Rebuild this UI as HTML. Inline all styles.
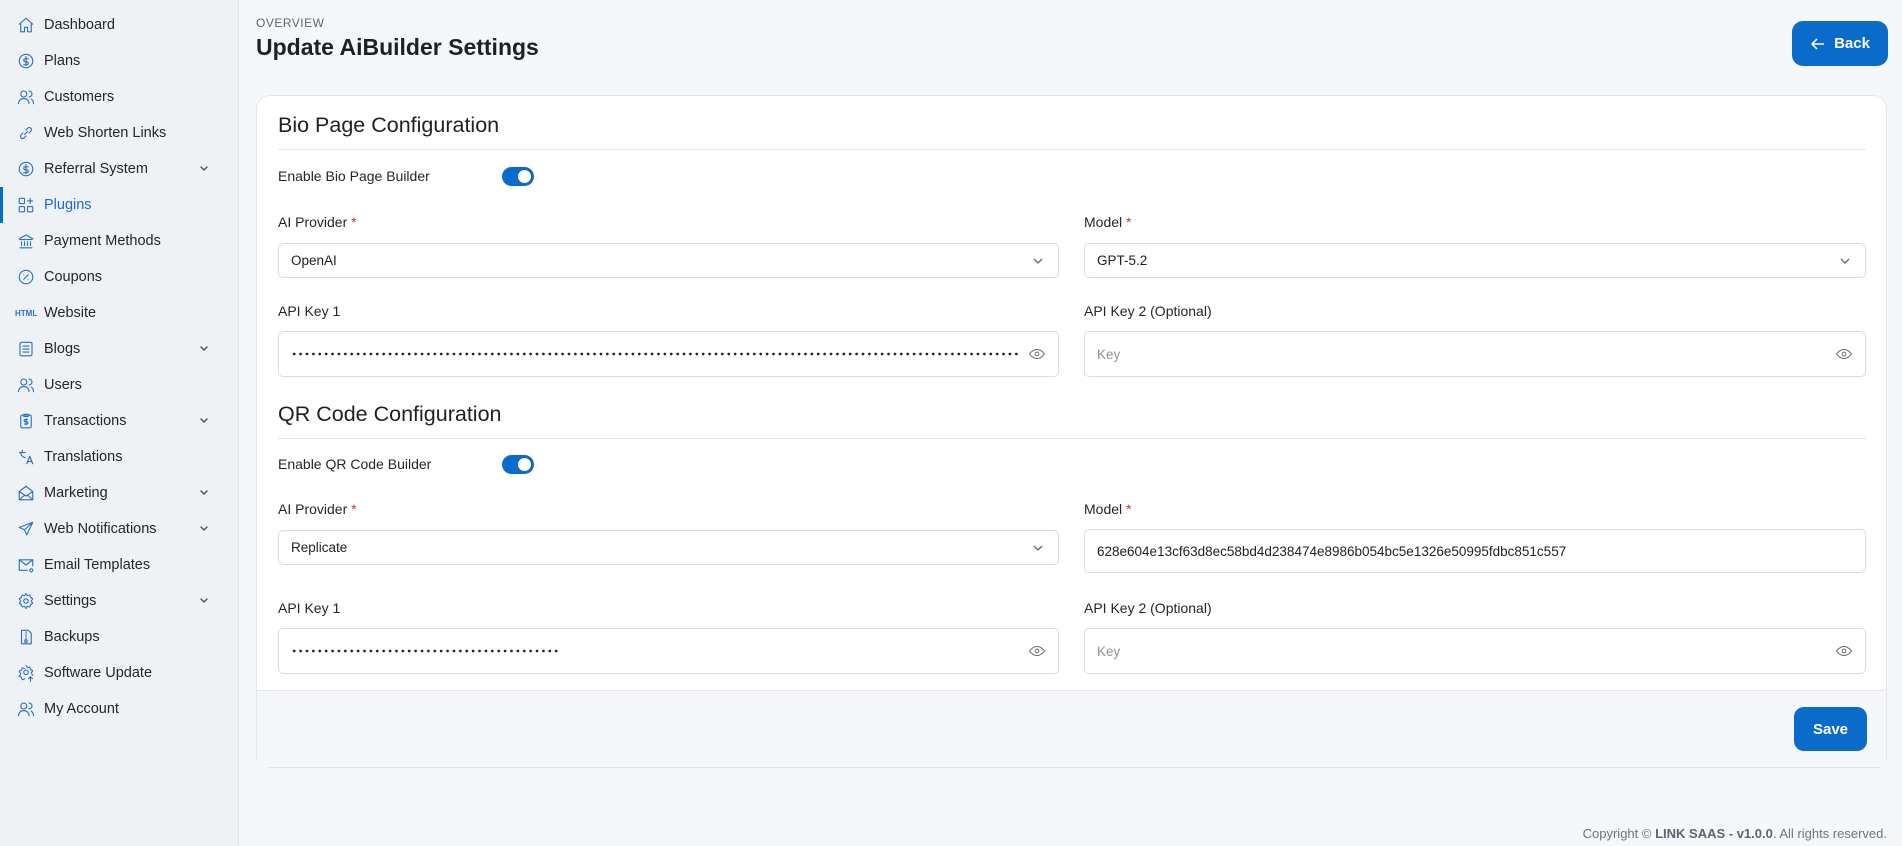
<!DOCTYPE html>
<html><head><meta charset="utf-8"><style>
*{box-sizing:border-box;margin:0;padding:0}
body{width:1902px;height:846px;overflow:hidden;background:#f5f7fa;font-family:"Liberation Sans",sans-serif;color:#1c2126;position:relative}
.sb{position:absolute;left:0;top:0;width:239px;height:846px;background:#eef2f5;border-right:1px solid #dde3e8}
.it{position:absolute;left:0;height:30px;width:238px;display:flex;align-items:center;font-size:14.5px;color:#22272c}
.it svg{position:absolute;left:17px;width:18px;height:18px;fill:none;stroke:#2d6fc4;stroke-width:1.5;stroke-linecap:round;stroke-linejoin:round}
.it span{position:absolute;left:44px}
.it .ch{position:absolute;left:199px;width:10px;height:10px}
.it .ch svg{left:0;width:10px;height:10px;stroke:#555}
.act{color:#1a6dc9}
.act:before{content:"";position:absolute;left:0;top:-3px;width:3px;height:36px;background:#0b6bcb}
.ov{position:absolute;left:256px;top:16px;font-size:12px;letter-spacing:.5px;color:#5e6670}
.h1{position:absolute;left:256px;top:34px;font-size:23px;font-weight:bold;color:#1c2126}
.back{position:absolute;left:1792px;top:21px;width:96px;height:45px;background:#0b6bcb;border-radius:11px;color:#fff;font-size:15px;font-weight:bold;display:flex;align-items:center;justify-content:center;gap:8px}
.card{position:absolute;left:256px;top:95px;width:1631px;height:595px;background:#fff;border:1px solid #e3e7ec;border-bottom:none;border-radius:14px 14px 0 0}
.foot{position:absolute;left:256px;top:690px;width:1631px;height:70px;background:#f5f7fa;border-top:1px solid #e3e7ec;border-left:1px solid #e3e7ec;border-right:1px solid #e3e7ec}
.line{position:absolute;left:267px;top:767px;width:1613px;height:1px;background:#e3e7ec}
.h2{position:absolute;left:278px;font-size:21.5px;color:#1c2126}
.div{position:absolute;left:278px;width:1588px;height:1px;background:#e3e7ec}
.lb{position:absolute;font-size:14px;color:#22272c}
.lb b{color:#d32f2f;font-weight:normal}
.in{position:absolute;background:#fff;border:1px solid #d8dde3;border-radius:5px;font-size:13.5px;display:flex;align-items:center;padding-left:12px;color:#1c2126}
.in .ph{color:#8a9199}
.dots{display:block;height:6.4px;background:radial-gradient(circle,#1c2126 1.2px,transparent 1.6px) 0 0/6.4px 6.4px repeat-x}
.in svg{position:absolute;right:12px;fill:none;stroke:#666;stroke-width:1.3}
.tg{position:absolute;left:502px;width:32px;height:19px;border-radius:10px;background:#0b6bcb}
.tg:after{content:"";position:absolute;right:3px;top:3px;width:13px;height:13px;border-radius:50%;background:#fff}
.save{position:absolute;left:1794px;top:707px;width:73px;height:44px;background:#0b6bcb;border-radius:10px;color:#fff;font-weight:bold;font-size:15px;display:flex;align-items:center;justify-content:center}
.copy{position:absolute;right:15px;top:826px;font-size:13px;color:#6b7480}
.copy b{color:#5b6470}
</style></head><body>
<div class="sb">
<div class="it" style="top:10px"><svg viewBox="0 0 24 24"><path d="M3 11l9-8 9 8M5 9v12h5v-6h4v6h5V9"/></svg><span>Dashboard</span></div>
<div class="it" style="top:46px"><svg viewBox="0 0 24 24"><circle cx="12" cy="12" r="9"/><path d="M15 9h-4a2 2 0 000 4h2a2 2 0 010 4H9M12 6v12"/></svg><span>Plans</span></div>
<div class="it" style="top:82px"><svg viewBox="0 0 24 24"><circle cx="9" cy="8" r="4"/><path d="M2 21c0-4 3-7 7-7s7 3 7 7M16 4a4 4 0 010 8M19 15c2 1 3 3 3 6"/></svg><span>Customers</span></div>
<div class="it" style="top:118px"><svg viewBox="0 0 24 24"><path d="M10 14l4-4M8 12l-3 3a3 3 0 004 4l3-3M16 12l3-3a3 3 0 00-4-4l-3 3"/></svg><span>Web Shorten Links</span></div>
<div class="it" style="top:154px"><svg viewBox="0 0 24 24"><circle cx="12" cy="12" r="9"/><path d="M15 9h-4a2 2 0 000 4h2a2 2 0 010 4H9M12 6v12"/></svg><span>Referral System</span><div class="ch"><svg viewBox="0 0 10 10"><path d="M2 3l3 3 3-3"/></svg></div></div>
<div class="it act" style="top:190px"><svg viewBox="0 0 24 24"><rect x="3" y="3" width="7" height="7" rx="1"/><rect x="3" y="14" width="7" height="7" rx="1"/><rect x="14" y="14" width="7" height="7" rx="1"/><path d="M17.5 3v7M14 6.5h7"/></svg><span>Plugins</span></div>
<div class="it" style="top:226px"><svg viewBox="0 0 24 24"><path d="M3 9l9-5 9 5M4 10h16M4 21h16M6 13v5M10 13v5M14 13v5M18 13v5"/></svg><span>Payment Methods</span></div>
<div class="it" style="top:262px"><svg viewBox="0 0 24 24"><circle cx="12" cy="12" r="9"/><path d="M9 15l6-6M9 9h.01M15 15h.01"/></svg><span>Coupons</span></div>
<div class="it" style="top:298px"><span style="left:15px;font-size:8px;font-weight:bold;color:#2d6fc4">HTML</span><span>Website</span></div>
<div class="it" style="top:334px"><svg viewBox="0 0 24 24"><rect x="4" y="3" width="16" height="18" rx="2"/><path d="M8 8h8M8 12h8M8 16h8"/></svg><span>Blogs</span><div class="ch"><svg viewBox="0 0 10 10"><path d="M2 3l3 3 3-3"/></svg></div></div>
<div class="it" style="top:370px"><svg viewBox="0 0 24 24"><circle cx="9" cy="8" r="4"/><path d="M2 21c0-4 3-7 7-7s7 3 7 7M16 4a4 4 0 010 8M19 15c2 1 3 3 3 6"/></svg><span>Users</span></div>
<div class="it" style="top:406px"><svg viewBox="0 0 24 24"><rect x="5" y="4" width="14" height="17" rx="2"/><path d="M9 3h6v3H9zM14 10h-3a1.5 1.5 0 000 3h2a1.5 1.5 0 010 3h-3M12 9v8"/></svg><span>Transactions</span><div class="ch"><svg viewBox="0 0 10 10"><path d="M2 3l3 3 3-3"/></svg></div></div>
<div class="it" style="top:442px"><svg viewBox="0 0 24 24"><path d="M3 6h8M7 3v3M5 6c0 4 3 6 6 7M13 21l4-10 4 10M14.5 18h5"/></svg><span>Translations</span></div>
<div class="it" style="top:478px"><svg viewBox="0 0 24 24"><path d="M3 10l9-7 9 7v11H3zM3 10l9 6 9-6M3 21l7-6M21 21l-7-6"/></svg><span>Marketing</span><div class="ch"><svg viewBox="0 0 10 10"><path d="M2 3l3 3 3-3"/></svg></div></div>
<div class="it" style="top:514px"><svg viewBox="0 0 24 24"><path d="M21 3L3 10l7 3 3 7zM10 13l11-10"/></svg><span>Web Notifications</span><div class="ch"><svg viewBox="0 0 10 10"><path d="M2 3l3 3 3-3"/></svg></div></div>
<div class="it" style="top:550px"><svg viewBox="0 0 24 24"><path d="M14 19H3V5h18v8M3 5l9 7 9-7"/><circle cx="19" cy="19" r="2"/></svg><span>Email Templates</span></div>
<div class="it" style="top:586px"><svg viewBox="0 0 24 24"><circle cx="12" cy="12" r="3"/><path d="M12 2l2 3 3-1 1 3 3 2-2 3 2 3-3 2-1 3-3-1-2 3-2-3-3 1-1-3-3-2 2-3-2-3 3-2 1-3 3 1z"/></svg><span>Settings</span><div class="ch"><svg viewBox="0 0 10 10"><path d="M2 3l3 3 3-3"/></svg></div></div>
<div class="it" style="top:622px"><svg viewBox="0 0 24 24"><path d="M6 3h9l4 4v14H6zM12 5v2M12 9v2M12 13v2"/><rect x="10.5" y="16" width="3" height="3"/></svg><span>Backups</span></div>
<div class="it" style="top:658px"><svg viewBox="0 0 24 24"><circle cx="12" cy="11" r="3"/><path d="M12 2l2 3 3-1 1 3 3 2-2 3 2 3M10 20l-3 1-1-3-3-2 2-3-2-3 3-2 1-3 3 1M18 23v-6M15.5 19.5L18 17l2.5 2.5"/></svg><span>Software Update</span></div>
<div class="it" style="top:694px"><svg viewBox="0 0 24 24"><circle cx="9" cy="8" r="4"/><path d="M2 21c0-4 3-7 7-7s7 3 7 7M16 4a4 4 0 010 8M19 15c2 1 3 3 3 6"/></svg><span>My Account</span></div>
</div>

<div class="ov">OVERVIEW</div>
<div class="h1">Update AiBuilder Settings</div>
<div class="back"><svg width="16" height="16" viewBox="0 0 16 16" fill="none" stroke="#fff" stroke-width="1.5"><path d="M14 8H2M7 3L2 8l5 5"/></svg>Back</div>

<div class="card"></div>
<div class="foot"></div>
<div class="line"></div>

<div class="h2" style="top:113px">Bio Page Configuration</div>
<div class="div" style="top:149px"></div>
<div class="lb" style="left:278px;top:168px">Enable Bio Page Builder</div>
<div class="tg" style="top:167px"></div>
<div class="lb" style="left:278px;top:214px">AI Provider <b>*</b></div>
<div class="lb" style="left:1084px;top:214px">Model <b>*</b></div>
<div class="in" style="left:278px;top:243px;width:781px;height:35px">OpenAI<svg width="12" height="12" viewBox="0 0 12 12" style="right:14px"><path d="M2 4l4 4 4-4"/></svg></div>
<div class="in" style="left:1084px;top:243px;width:782px;height:35px">GPT-5.2<svg width="12" height="12" viewBox="0 0 12 12" style="right:14px"><path d="M2 4l4 4 4-4"/></svg></div>
<div class="lb" style="left:278px;top:303px">API Key 1</div>
<div class="lb" style="left:1084px;top:303px">API Key 2 (Optional)</div>
<div class="in" style="left:278px;top:331px;width:781px;height:46px"><span class="dots" style="width:729px"></span><svg width="18" height="18" viewBox="0 0 24 24"><path d="M2 12s4-6 10-6 10 6 10 6-4 6-10 6S2 12 2 12z"/><circle cx="12" cy="12" r="2.5"/></svg></div>
<div class="in" style="left:1084px;top:331px;width:782px;height:46px"><span class="ph">Key</span><svg width="18" height="18" viewBox="0 0 24 24"><path d="M2 12s4-6 10-6 10 6 10 6-4 6-10 6S2 12 2 12z"/><circle cx="12" cy="12" r="2.5"/></svg></div>

<div class="h2" style="top:402px">QR Code Configuration</div>
<div class="div" style="top:438px"></div>
<div class="lb" style="left:278px;top:456px">Enable QR Code Builder</div>
<div class="tg" style="top:455px"></div>
<div class="lb" style="left:278px;top:501px">AI Provider <b>*</b></div>
<div class="lb" style="left:1084px;top:501px">Model <b>*</b></div>
<div class="in" style="left:278px;top:530px;width:781px;height:35px">Replicate<svg width="12" height="12" viewBox="0 0 12 12" style="right:14px"><path d="M2 4l4 4 4-4"/></svg></div>
<div class="in" style="left:1084px;top:529px;width:782px;height:44px">628e604e13cf63d8ec58bd4d238474e8986b054bc5e1326e50995fdbc851c557</div>
<div class="lb" style="left:278px;top:600px">API Key 1</div>
<div class="lb" style="left:1084px;top:600px">API Key 2 (Optional)</div>
<div class="in" style="left:278px;top:628px;width:781px;height:46px"><span class="dots" style="width:268px"></span><svg width="18" height="18" viewBox="0 0 24 24"><path d="M2 12s4-6 10-6 10 6 10 6-4 6-10 6S2 12 2 12z"/><circle cx="12" cy="12" r="2.5"/></svg></div>
<div class="in" style="left:1084px;top:628px;width:782px;height:46px"><span class="ph">Key</span><svg width="18" height="18" viewBox="0 0 24 24"><path d="M2 12s4-6 10-6 10 6 10 6-4 6-10 6S2 12 2 12z"/><circle cx="12" cy="12" r="2.5"/></svg></div>

<div class="save">Save</div>
<div class="copy">Copyright © <b>LINK SAAS - v1.0.0</b>. All rights reserved.</div>
</body></html>
